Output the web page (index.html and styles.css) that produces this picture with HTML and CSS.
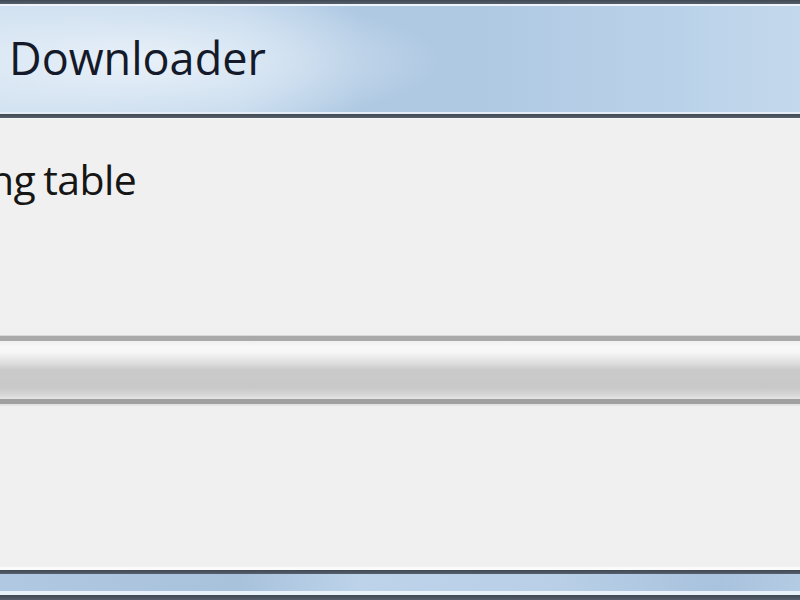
FILE: index.html
```html
<!DOCTYPE html>
<html lang="en">
<head>
    <meta charset="UTF-8">
    <meta name="viewport" content="width=device-width, initial-scale=1.0">
    <title>Downloader</title>
    <link rel="stylesheet" href="styles.css">
</head>
<body>
    <div class="window">
        <!-- Caption -->
        <div class="frame-edge"></div>
        <div class="caption">
            <span class="caption-title">Downloader</span>
        </div>
        <div class="frame-edge"></div>

        <!-- Client area -->
        <div class="client">
            <p class="status">ng table</p>
            <div class="progress">
                <div class="progress-fill"></div>
            </div>
        </div>

        <!-- Bottom frame -->
        <div class="bottom-frame">
            <div class="frame-edge"></div>
            <div class="bottom-glass"></div>
            <div class="frame-edge thick"></div>
        </div>
    </div>
</body>
</html>
```

FILE: styles.css
```css
body {
    margin: 0;
    background-color: #f0f0f0;
    font-family: 'Open Sans', 'Liberation Sans', sans-serif;
    overflow: hidden;
}
.window {
    width: 800px;
    height: 600px;
    display: flex;
    flex-direction: column;
}
.frame-edge {
    height: 4px;
    background: linear-gradient(#3f4853, #56606c);
    flex: none;
}
.frame-edge.thick {
    height: 5px;
}
.caption {
    height: 106px;
    flex: none;
    display: flex;
    align-items: center;
    border-top: 2px solid #eef4fa;
    border-bottom: 2px solid #e4edf6;
    background:
        radial-gradient(ellipse 300px 70px at 140px 55px, rgba(236, 243, 250, 0.9), rgba(236, 243, 250, 0) 100%),
        linear-gradient(90deg, #cfe0f0 0%, #c3d8ec 30%, #afc9e3 45%, #b0c9e3 60%, #bad2e9 85%, #c4d8ec 100%);
}
.caption-title {
    padding-left: 9px;
    padding-bottom: 4px;
    font-family: 'Open Sans', sans-serif;
    font-size: 45px;
    color: #141a2a;
}
.client {
    flex: 1;
    background-color: #f0f0f0;
    border-top: 1px solid #f7f7f7;
    overflow: hidden;
}
.status {
    margin: 0 0 0 -11px;
    padding-top: 34px;
    font-family: 'Open Sans', sans-serif;
    font-size: 41px;
    line-height: 52px;
    letter-spacing: -0.6px;
    word-spacing: -2px;
    color: #161616;
}
.progress {
    margin-top: 131px;
    height: 58px;
    border-top: 5px solid #a9a9a9;
    border-bottom: 5px solid #a0a0a0;
    box-shadow: 0 -1px 0 #d8d8d8, 0 2px 0 #e2e2e2;
}
.progress-fill {
    height: 100%;
    background: linear-gradient(#f0f0f0 0%, #f8f8f8 10%, #f6f6f6 20%, #dedede 38%, #cacaca 50%, #c8c8c8 80%, #d6d6d6 92%, #e4e4e4 100%);
}
.bottom-frame {
    flex: none;
    border-top: 3px solid #fbfbfb;
}
.bottom-glass {
    height: 17px;
    border-bottom: 4px solid #e8f0f8;
    background: linear-gradient(90deg, #b0c8e2 0%, #a9c2dc 30%, #bcd3ea 45%, #b8cfe7 70%, #a9c2dd 90%, #b4cbe4 100%);
}
```
